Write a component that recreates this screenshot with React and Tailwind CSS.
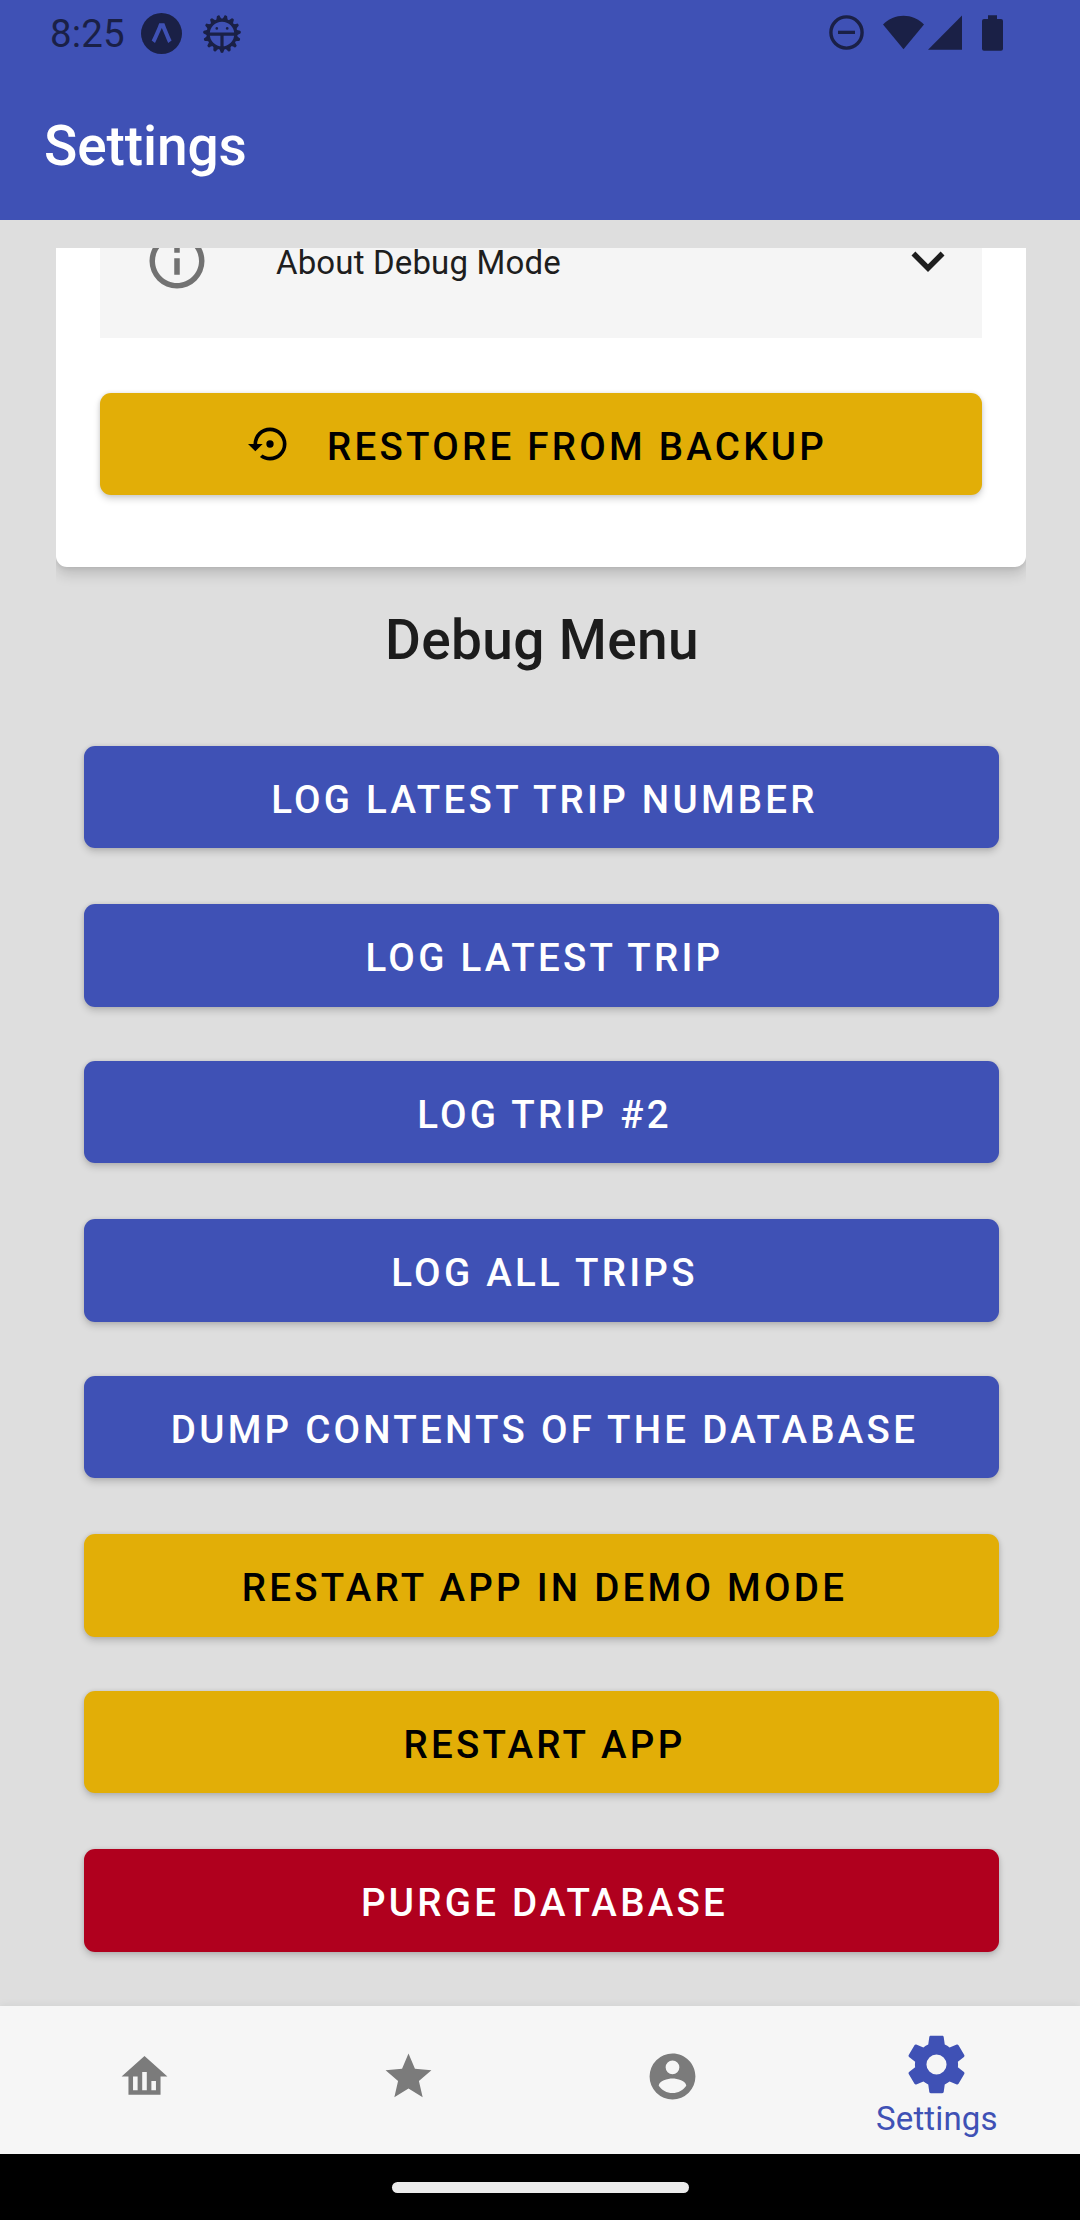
const ICONS = {
  info: "M11,9H13V7H11M12,20C7.59,20 4,16.41 4,12C4,7.59 7.59,4 12,4C16.41,4 20,7.59 20,12C20,16.41 16.41,20 12,20M12,2A10,10 0 0,0 2,12A10,10 0 0,0 12,22A10,10 0 0,0 22,12A10,10 0 0,0 12,2M11,17H13V11H11V17Z",
  chevronDown: "M7.41,8.58L12,13.17L16.59,8.58L18,10L12,16L6,10L7.41,8.58Z",
  restore:
    "M12,3A9,9 0 0,0 3,12H0L4,16L8,12H5A7,7 0 0,1 12,5A7,7 0 0,1 19,12A7,7 0 0,1 12,19C10.5,19 9.09,18.5 7.94,17.7L6.5,19.14C8.04,20.3 9.94,21 12,21A9,9 0 0,0 21,12A9,9 0 0,0 12,3M14,12A2,2 0 0,0 12,10A2,2 0 0,0 10,12A2,2 0 0,0 12,14A2,2 0 0,0 14,12Z",
  home: "M12 3L2 12H5V20H19V12H22L12 3M9 18H7V12H9V18M13 18H11V10H13V18M17 18H15V14H17V18Z",
  star: "M12,17.27L18.18,21L16.54,13.97L22,9.24L14.81,8.62L12,2L9.19,8.62L2,9.24L7.45,13.97L5.82,21L12,17.27Z",
  account:
    "M12,19.2C9.5,19.2 7.29,17.92 6,16C6.03,14 10,12.9 12,12.9C14,12.9 17.97,14 18,16C16.71,17.92 14.5,19.2 12,19.2M12,5A3,3 0 0,1 15,8A3,3 0 0,1 12,11A3,3 0 0,1 9,8A3,3 0 0,1 12,5M12,2A10,10 0 0,0 2,12A10,10 0 0,0 12,22A10,10 0 0,0 22,12C22,6.47 17.5,2 12,2Z",
  cog: "M12,15.5A3.5,3.5 0 0,1 8.5,12A3.5,3.5 0 0,1 12,8.5A3.5,3.5 0 0,1 15.5,12A3.5,3.5 0 0,1 12,15.5M19.43,12.97C19.47,12.65 19.5,12.33 19.5,12C19.5,11.67 19.47,11.34 19.43,11L21.54,9.37C21.73,9.22 21.78,8.95 21.66,8.73L19.66,5.27C19.54,5.05 19.27,4.96 19.05,5.05L16.56,6.05C16.04,5.66 15.5,5.32 14.87,5.07L14.5,2.42C14.46,2.18 14.25,2 14,2H10C9.75,2 9.54,2.18 9.5,2.42L9.13,5.07C8.5,5.32 7.96,5.66 7.44,6.05L4.95,5.05C4.73,4.96 4.46,5.05 4.34,5.27L2.34,8.73C2.21,8.95 2.27,9.22 2.46,9.37L4.57,11C4.53,11.34 4.5,11.67 4.5,12C4.5,12.33 4.53,12.65 4.57,12.97L2.46,14.63C2.27,14.78 2.21,15.05 2.34,15.27L4.34,18.73C4.46,18.95 4.73,19.03 4.95,18.95L7.44,17.94C7.96,18.34 8.5,18.68 9.13,18.93L9.5,21.58C9.54,21.82 9.75,22 10,22H14C14.25,22 14.46,21.82 14.5,21.58L14.87,18.93C15.5,18.67 16.04,18.34 16.56,17.94L19.05,18.95C19.27,19.03 19.54,18.95 19.66,18.73L21.66,15.27C21.78,15.05 21.73,14.78 21.54,14.63L19.43,12.97Z",
};

function Icon({ name, className }) {
  return (
    <svg viewBox="0 0 24 24" fill="currentColor" className={`shrink-0 ${className}`}>
      <path d={ICONS[name]} />
    </svg>
  );
}

function ExpoIcon() {
  return (
    <svg viewBox="0 0 41 41" className="ml-[17px] size-[41px]">
      <circle cx="20.5" cy="20.5" r="20.5" fill="currentColor" />
      <path
        d="M18.2 10.2H23.4C25.4 15.6 28 21.8 30.6 27.4L27.2 29.9C25 25 22.8 19.6 20.8 15C18.8 19.6 16.4 25 14 29.9L10.7 27.4C13.4 21.8 16.2 15.6 18.2 10.2Z"
        fill="#3f51b5"
      />
    </svg>
  );
}

const TEETH = Array.from({ length: 15 }, (_, i) => 12 + i * 24);

function BugGearIcon() {
  return (
    <svg viewBox="-20 -20 40 40" className="ml-5 size-10">
      <circle r="13.9" fill="none" stroke="currentColor" strokeWidth="3.2" />
      {TEETH.map((a) => (
        <path key={a} d="M-2.8 -14.5L-1.7 -17.3A1.7 1.7 0 0 1 1.7 -17.3L2.8 -14.5Z" transform={`rotate(${a})`} fill="currentColor" />
      ))}
      <path d="M-13 -1.4H13V1.8H1.6V13H-1.6V1.8H-13Z" fill="currentColor" />
      <circle cx="-5.2" cy="-5.6" r="1.3" fill="currentColor" />
      <circle cx="5.2" cy="-5.6" r="1.3" fill="currentColor" />
    </svg>
  );
}

function StatusBar() {
  return (
    <div className="flex h-[67px] items-center pl-[50px] pr-[77px] text-[#1a2046]">
      <span className="w-[74px] text-[38.5px] leading-[70px] tracking-[0.1px]">8:25</span>
      <ExpoIcon />
      <BugGearIcon />
      <svg viewBox="0 0 174 40" className="-mt-px ml-auto h-10 w-[174px]" fill="currentColor">
        <circle cx="17.5" cy="19.5" r="15.6" fill="none" stroke="currentColor" strokeWidth="3.4" />
        <path d="M9 17.7H26V21H9Z" />
        <path d="M54 11.4C65 -0.2 84 -0.2 95 11.4L74.5 36.3Z" />
        <path d="M99 36.7L133 2.4V36.7Z" />
        <path d="M159 2.3H168V6H172Q174 6 174 8V35.7Q174 37.7 172 37.7H155Q153 37.7 153 35.7V8Q153 6 155 6H159Z" />
      </svg>
    </div>
  );
}

const TONES = {
  primary: "bg-[#3f51b5] text-white",
  warning: "bg-[#e2ae07] text-black",
  danger: "bg-[#b0001e] text-white",
};

function Button({ tone, icon, tall, children }) {
  return (
    <button
      className={`flex w-full shrink-0 items-start justify-center rounded-[11px] text-[38.5px] font-medium tracking-[3.25px] whitespace-nowrap shadow-[0_4px_7px_rgba(0,0,0,0.17),0_0_4px_rgba(0,0,0,0.1)] ${icon ? "pr-[7px]" : "pl-[6px]"} ${tall ? "h-[103px]" : "h-[102px]"} ${TONES[tone]}`}
    >
      {icon && <Icon name={icon} className="mt-[28.5px] mr-[35px] size-11" />}
      <span className="leading-[108px]">{children}</span>
    </button>
  );
}

const DEBUG_ACTIONS = [
  ["LOG LATEST TRIP NUMBER", "primary"],
  ["LOG LATEST TRIP", "primary"],
  ["LOG TRIP #2", "primary"],
  ["LOG ALL TRIPS", "primary"],
  ["DUMP CONTENTS OF THE DATABASE", "primary"],
  ["RESTART APP IN DEMO MODE", "warning"],
  ["RESTART APP", "warning"],
  ["PURGE DATABASE", "danger"],
];
const TABS = ["home", "star", "account"];

export default function App() {
  return (
    <div className="flex h-[2220px] w-[1080px] flex-col overflow-hidden bg-[#dedede] font-[Roboto,sans-serif]">
      <header className="h-[220px] shrink-0 bg-[#3f51b5]">
        <StatusBar />
        <h1 className="pl-11 text-[55px] leading-[158px] font-medium tracking-[-0.1px] text-white">Settings</h1>
      </header>

      <main className="mx-[56px] mt-[28px] h-[1758px] w-[970px] shrink-0 overflow-hidden">
        <section className="-mt-5 h-[339px] rounded-[11px] bg-white px-11 shadow-[0_7px_14px_rgba(0,0,0,0.16),0_1px_5px_rgba(0,0,0,0.08)]">
          <div className="flex h-[110px] items-start bg-[#f5f5f5] pr-[21.5px] pl-11">
            <Icon name="info" className="size-[66px] text-[#727272]" />
            <span className="mt-5 ml-[66px] text-[33px] leading-[30px] tracking-[0.15px] text-[#1e1e1e]">About Debug Mode</span>
            <Icon name="chevronDown" className="ml-auto size-[66px] text-[#1e1e1e]" />
          </div>
          <div className="pt-[55px]">
            <Button tone="warning" icon="restore">RESTORE FROM BACKUP</Button>
          </div>
        </section>
        <h2 className="mt-[44px] pl-0.5 text-center text-[55px] leading-[58px] font-medium tracking-[0.35px] text-[#1c1c1c]">Debug Menu</h2>
        <div className="mt-[77px] mr-[27px] ml-[28px] flex flex-col gap-[55px]">
          {DEBUG_ACTIONS.map(([label, tone], i) => (
            <div key={label} className={i % 2 ? "-mb-px pt-px" : ""}>
              <Button tone={tone} tall={i % 2 === 1}>{label}</Button>
            </div>
          ))}
        </div>
      </main>

      <nav className="relative flex h-[148px] shrink-0 bg-[#f6f6f6] pr-[11px] pl-3 shadow-[0_-1px_8px_rgba(0,0,0,0.06)]">
        {TABS.map((t) => (
          <a key={t} className="flex flex-1 items-start justify-center pt-[43px] text-[#7b7b7b]">
            <Icon name={t} className="size-[55px]" />
          </a>
        ))}
        <a className="flex flex-1 flex-col items-center pt-6 text-[#3f51b5]">
          <Icon name="cog" className="size-[69px]" />
          <span className="mt-[1px] text-[33px] leading-[37px] tracking-[0.15px]">Settings</span>
        </a>
      </nav>

      <div className="flex h-[66px] shrink-0 items-center justify-center bg-black">
        <div className="h-[11px] w-[297px] rounded-full bg-[#ebebeb]" />
      </div>
    </div>
  );
}
